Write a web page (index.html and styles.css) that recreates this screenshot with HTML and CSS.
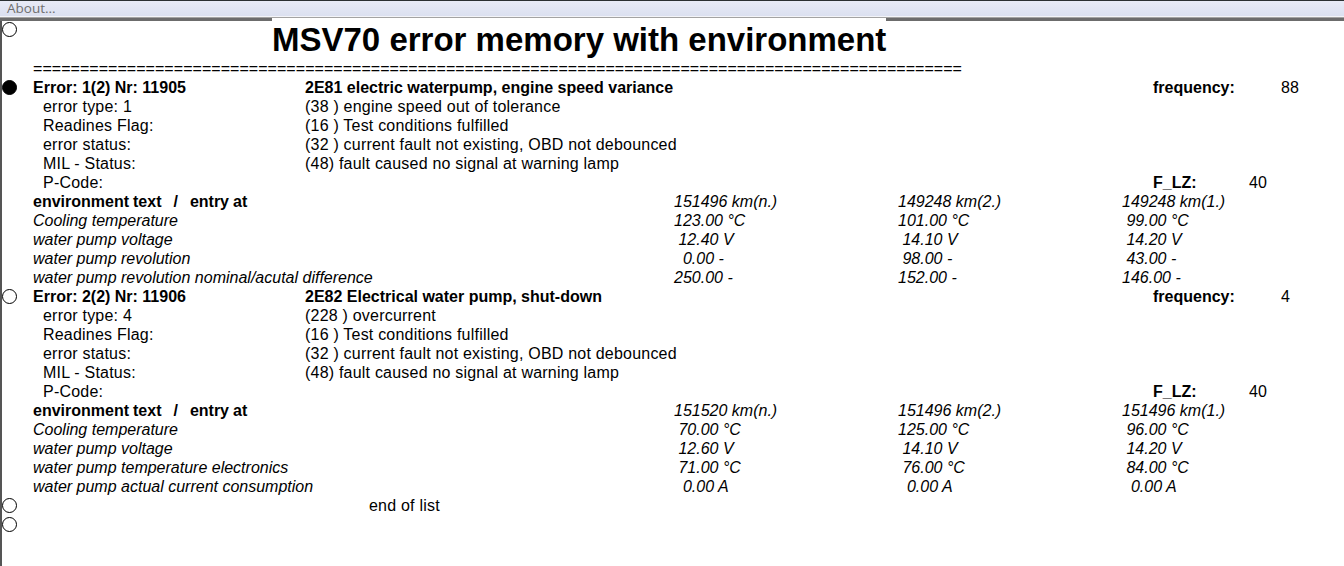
FILE: index.html
```html
<!DOCTYPE html>
<html>
<head>
<meta charset="utf-8">
<title>MSV70 error memory with environment</title>
<link rel="stylesheet" href="styles.css">
</head>
<body>
<div class="menubar"><span class="menu-item">About...</span></div>
<div class="sheet">
  <div class="title-row">
    <span class="marker top"><i class="dot"></i></span>
    <h1 class="title">MSV70 error memory with environment</h1>
  </div>
  <div class="row"><span class="marker"></span><span class="sep">===================================================================================================</span></div>

  <div class="row"><span class="marker"><i class="dot on"></i></span><span class="lbl b">Error: 1(2) Nr: 11905</span><span class="desc b">2E81 electric waterpump, engine speed variance</span><span class="key b">frequency:</span><span>88</span></div>
  <div class="row"><span class="marker"></span><span class="lbl sub">error type: 1</span><span class="desc">(38 ) engine speed out of tolerance</span></div>
  <div class="row"><span class="marker"></span><span class="lbl sub">Readines Flag:</span><span class="desc">(16 ) Test conditions fulfilled</span></div>
  <div class="row"><span class="marker"></span><span class="lbl sub">error status:</span><span class="desc">(32 ) current fault not existing, OBD not debounced</span></div>
  <div class="row"><span class="marker"></span><span class="lbl sub">MIL - Status:</span><span class="desc">(48) fault caused no signal at warning lamp</span></div>
  <div class="row"><span class="marker"></span><span class="lbl sub">P-Code:</span><span class="desc"></span><span class="key short b">F_LZ:</span><span>40</span></div>
  <div class="row"><span class="marker"></span><span class="env-lbl b env-head">environment text   /   entry at</span><span class="val">151496 km(n.)</span><span class="val">149248 km(2.)</span><span class="val">149248 km(1.)</span></div>
  <div class="row"><span class="marker"></span><span class="env-lbl i">Cooling temperature</span><span class="val">123.00 °C</span><span class="val">101.00 °C</span><span class="val"> 99.00 °C</span></div>
  <div class="row"><span class="marker"></span><span class="env-lbl i">water pump voltage</span><span class="val"> 12.40 V</span><span class="val"> 14.10 V</span><span class="val"> 14.20 V</span></div>
  <div class="row"><span class="marker"></span><span class="env-lbl i">water pump revolution</span><span class="val">  0.00 -</span><span class="val"> 98.00 -</span><span class="val"> 43.00 -</span></div>
  <div class="row"><span class="marker"></span><span class="env-lbl i">water pump revolution nominal/acutal difference</span><span class="val">250.00 -</span><span class="val">152.00 -</span><span class="val">146.00 -</span></div>

  <div class="row"><span class="marker"><i class="dot"></i></span><span class="lbl b">Error: 2(2) Nr: 11906</span><span class="desc b">2E82 Electrical water pump, shut-down</span><span class="key b">frequency:</span><span>4</span></div>
  <div class="row"><span class="marker"></span><span class="lbl sub">error type: 4</span><span class="desc">(228 ) overcurrent</span></div>
  <div class="row"><span class="marker"></span><span class="lbl sub">Readines Flag:</span><span class="desc">(16 ) Test conditions fulfilled</span></div>
  <div class="row"><span class="marker"></span><span class="lbl sub">error status:</span><span class="desc">(32 ) current fault not existing, OBD not debounced</span></div>
  <div class="row"><span class="marker"></span><span class="lbl sub">MIL - Status:</span><span class="desc">(48) fault caused no signal at warning lamp</span></div>
  <div class="row"><span class="marker"></span><span class="lbl sub">P-Code:</span><span class="desc"></span><span class="key short b">F_LZ:</span><span>40</span></div>
  <div class="row"><span class="marker"></span><span class="env-lbl b env-head">environment text   /   entry at</span><span class="val">151520 km(n.)</span><span class="val">151496 km(2.)</span><span class="val">151496 km(1.)</span></div>
  <div class="row"><span class="marker"></span><span class="env-lbl i">Cooling temperature</span><span class="val"> 70.00 °C</span><span class="val">125.00 °C</span><span class="val"> 96.00 °C</span></div>
  <div class="row"><span class="marker"></span><span class="env-lbl i">water pump voltage</span><span class="val"> 12.60 V</span><span class="val"> 14.10 V</span><span class="val"> 14.20 V</span></div>
  <div class="row"><span class="marker"></span><span class="env-lbl i">water pump temperature electronics</span><span class="val"> 71.00 °C</span><span class="val"> 76.00 °C</span><span class="val"> 84.00 °C</span></div>
  <div class="row"><span class="marker"></span><span class="env-lbl i">water pump actual current consumption</span><span class="val">  0.00 A</span><span class="val">  0.00 A</span><span class="val">  0.00 A</span></div>

  <div class="row"><span class="marker"><i class="dot"></i></span><span class="end">end of list</span></div>
  <div class="row"><span class="marker"><i class="dot"></i></span></div>
</div>
</body>
</html>
```

FILE: styles.css
```css
* {
  box-sizing: border-box;
  margin: 0;
  padding: 0;
}

html, body {
  background: #fff;
}

body {
  margin: 0;
  overflow: hidden;
  font-family: "Liberation Sans", Arial, sans-serif;
  font-size: 16px;
  color: #000;
}

.menubar {
  height: 21px;
  padding-left: 7px;
  background: linear-gradient(to bottom,
    #2b3031 0, #2b3031 1px,
    #e8ebf6 1px, #dbe0f0 16px,
    #f3f4f8 16px, #f3f4f8 17px,
    #a3a3a3 17px, #a3a3a3 18px,
    #6c6c6c 18px, #6c6c6c 21px);
  font-family: "Open Sans", "Noto Sans", sans-serif;
  font-size: 13.5px;
  line-height: 16px;
  color: #6f6f6f;
}

.menu-item {
  display: inline-block;
}

.sheet {
  height: 545px;
  border-left: 2px solid #555;
  background: #fff;
}

.title-row {
  display: flex;
  align-items: flex-start;
  height: 38px;
}

.marker {
  width: 31px;
  height: 19px;
  flex: none;
  display: flex;
  align-items: center;
}

.marker.top {
  height: auto;
  padding-top: 1px;
}

.dot {
  display: block;
  width: 15px;
  height: 15px;
  border: 1px solid #000;
  border-radius: 50%;
  background: #fff;
}

.dot.on {
  background: #000;
}

.title {
  margin: -3px 0 0 239px;
  padding-top: 3px;
  background: #fff;
  font-size: 33px;
  line-height: 38px;
  font-weight: bold;
  white-space: nowrap;
}

.row {
  display: flex;
  height: 19px;
  line-height: 19px;
  white-space: pre;
  letter-spacing: 0.21px;
}

.b {
  font-weight: bold;
  letter-spacing: 0;
}

.i {
  font-style: italic;
  letter-spacing: 0;
}

.sep {
  letter-spacing: 0.04px;
}

.lbl {
  width: 272px;
  flex: none;
}

.lbl.sub {
  padding-left: 10px;
}

.desc {
  width: 848px;
  flex: none;
}

.key {
  width: 128px;
  flex: none;
}

.key.short {
  width: 96px;
}

.env-lbl {
  width: 641px;
  flex: none;
}

.env-head {
  word-spacing: -0.45px;
}

.val {
  width: 224px;
  flex: none;
  font-style: italic;
  letter-spacing: 0;
}

.end {
  margin-left: 336px;
}
```
